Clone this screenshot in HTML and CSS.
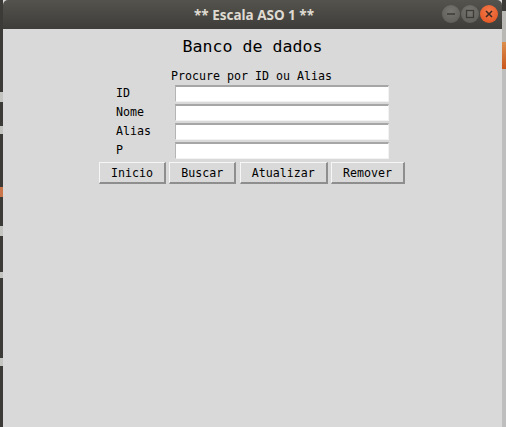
FILE: index.html
```html
<!DOCTYPE html>
<html>
<head>
<meta charset="utf-8">
<link rel="stylesheet" href="styles.css">
</head>
<body>
<div class="screen">
  <div class="edge-left">
    <span class="mark m1"></span>
    <span class="mark m2"></span>
    <span class="mark m3 orange"></span>
    <span class="mark m4"></span>
    <span class="mark m5"></span>
    <span class="mark m6"></span>
  </div>
  <div class="window">
    <div class="titlebar">
      <div class="title">** Escala ASO 1 **</div>
      <div class="controls">
        <span class="ctl">
          <svg width="18" height="18" viewBox="0 0 18 18"><line x1="5" y1="9" x2="13" y2="9" stroke="#3c3b37" stroke-width="1.5"/></svg>
        </span>
        <span class="ctl">
          <svg width="18" height="18" viewBox="0 0 18 18"><rect x="5.5" y="5.5" width="7" height="7" fill="none" stroke="#3c3b37" stroke-width="1.3"/></svg>
        </span>
        <span class="ctl close">
          <svg width="18" height="18" viewBox="0 0 18 18"><path d="M6 6 L12 12 M12 6 L6 12" stroke="#3c2a22" stroke-width="1.6"/></svg>
        </span>
      </div>
    </div>
    <div class="content">
      <h1 class="heading">Banco de dados</h1>
      <p class="hint">Procure por ID ou Alias</p>
      <div class="panel">
        <div class="form">
          <label class="lbl">ID</label><div class="entry"></div>
          <label class="lbl">Nome</label><div class="entry"></div>
          <label class="lbl">Alias</label><div class="entry"></div>
          <label class="lbl">P</label><div class="entry"></div>
        </div>
        <div class="buttons">
          <button class="btn">Inicio</button>
          <button class="btn">Buscar</button>
          <button class="btn">Atualizar</button>
          <button class="btn">Remover</button>
        </div>
      </div>
    </div>
  </div>
  <div class="edge-right">
    <span class="rtop"></span>
    <span class="rgrey"></span>
    <span class="rorange"></span>
    <span class="rrest"></span>
  </div>
</div>
</body>
</html>
```
FILE: styles.css
```css
html, body {
  margin: 0;
  padding: 0;
  width: 506px;
  height: 427px;
  overflow: hidden;
  background: #3c3b37;
}

.screen {
  display: flex;
  width: 506px;
  height: 427px;
}

.edge-left {
  width: 3px;
  background: #3c3b37;
  display: flex;
  flex-direction: column;
}

.mark {
  display: block;
  width: 3px;
  background: #c4c4c0;
}
.m1 { margin-top: 92px; height: 10px; }
.m2 { margin-top: 24px; height: 8px; }
.m3 { margin-top: 53px; height: 10px; }
.orange { background: #c8764a; }
.m4 { margin-top: 29px; height: 10px; }
.m5 { margin-top: 36px; height: 6px; }
.m6 { margin-top: 80px; height: 8px; }

.window {
  width: 499px;
  display: flex;
  flex-direction: column;
  background: #d9d9d9;
}

.titlebar {
  height: 29px;
  flex: none;
  position: relative;
  display: flex;
  align-items: center;
  justify-content: center;
  background: linear-gradient(#55534e, #3e3d39);
  border-radius: 5px 5px 0 0;
}

.title {
  font-family: "Noto Sans", sans-serif;
  font-weight: bold;
  font-size: 13.5px;
  color: #dfdbd2;
  margin-left: 3px;
  margin-top: 1px;
}

.controls {
  position: absolute;
  right: 4px;
  top: 5px;
  display: flex;
  gap: 1px;
}

.ctl {
  width: 18px;
  height: 18px;
  border-radius: 50%;
  background: radial-gradient(circle at 50% 35%, #77756f, #5c5a55);
  display: flex;
}

.ctl.close {
  background: radial-gradient(circle at 50% 35%, #f47a4c, #e0501b);
}

.content {
  flex: 1;
  display: flex;
  flex-direction: column;
  align-items: center;
  font-family: "DejaVu Sans Mono", monospace;
  color: #000;
}

.heading {
  margin: 8px 0 0 0;
  font-weight: normal;
  font-size: 16.6px;
  line-height: 20px;
  height: 20px;
}

.hint {
  margin: 12px 0 0 -2px;
  font-size: 11.63px;
  line-height: 14px;
}

.panel {
  width: 306px;
  margin-top: 2px;
  align-self: flex-start;
  margin-left: 96px;
  display: flex;
  flex-direction: column;
}

.form {
  display: grid;
  grid-template-columns: 76px 214px;
  row-gap: 2px;
}

.lbl {
  font-size: 11.63px;
  line-height: 17px;
  padding-left: 17px;
}

.entry {
  height: 17px;
  box-sizing: border-box;
  background: #fff;
  border-style: solid;
  border-width: 2px 1px 1px 1px;
  border-color: #a6a6a6 #f2f2f2 #f2f2f2 #b5b5b5;
}

.buttons {
  display: flex;
  justify-content: space-between;
  margin-top: 3px;
}

.btn {
  font-family: "DejaVu Sans Mono", monospace;
  font-size: 11.63px;
  color: #000;
  height: 22px;
  padding: 0 11px;
  margin: 0;
  background: #d9d9d9;
  border-style: solid;
  border-width: 1px 2px 2px 1px;
  border-color: #f6f6f6 #8e8e8e #8e8e8e #f6f6f6;
  border-radius: 0;
  line-height: 18px;
}

.edge-right {
  width: 4px;
  display: flex;
  flex-direction: column;
}

.rtop { display: block; height: 11px; background: #3c3b37; }
.rgrey { display: block; height: 31px; background: #b9b8b4; }
.rorange { display: block; height: 27px; background: linear-gradient(#dc8f4e, #c9551c); }
.rrest { display: block; flex: 1; background: #bebebe; }
```
